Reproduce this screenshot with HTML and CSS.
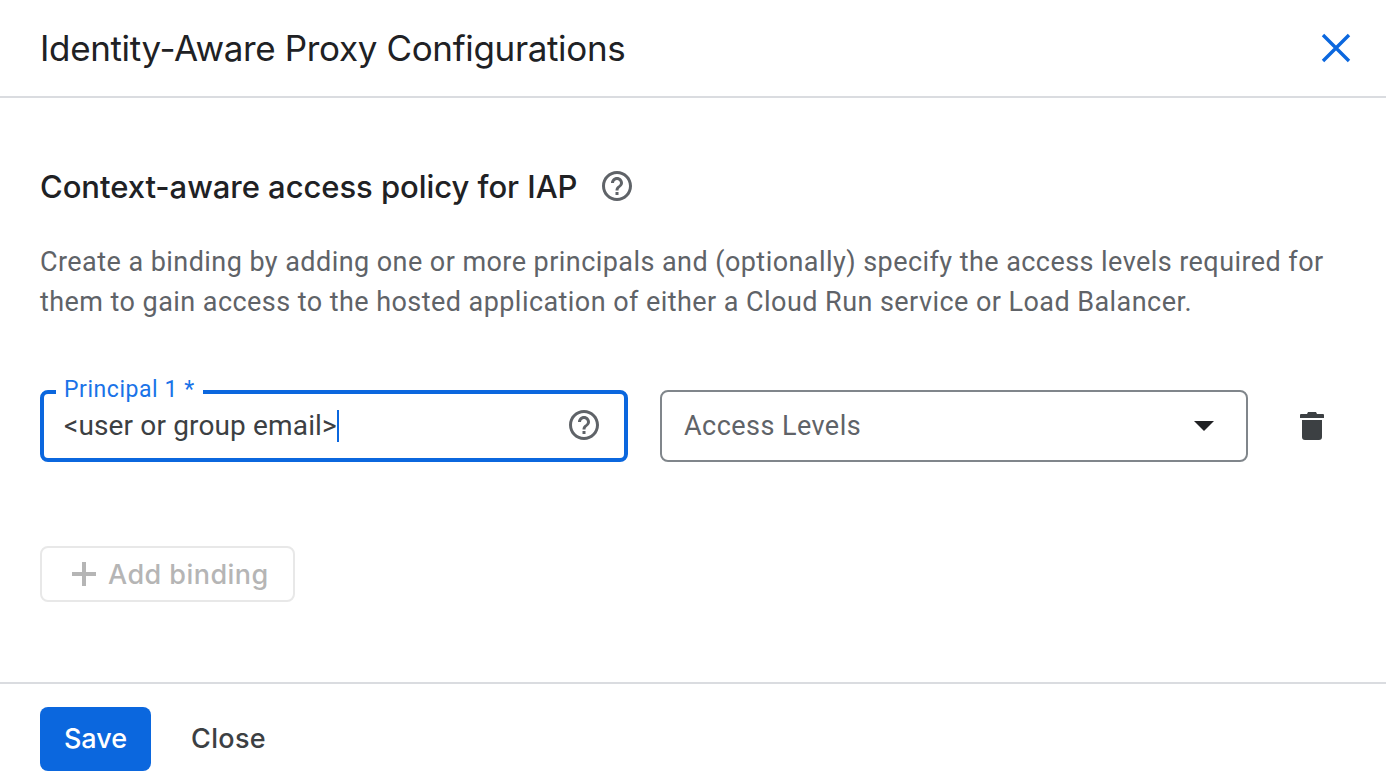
FILE: index.html
```html
<!DOCTYPE html>
<html>
<head>
	<title>Identity-Aware Proxy Configurations</title>
	<link rel="stylesheet" href="styles.css">
</head>
<body>
	<div class="panel">
		<div class="header">
			<h1 class="title">Identity-Aware Proxy Configurations</h1>
			<button class="close-x" aria-label="Close">
				<svg width="48" height="48" viewBox="0 0 48 48"><path d="M11 11L37 37M37 11L11 37" fill="none" stroke="#0b67de" stroke-width="3.4"/></svg>
			</button>
		</div>
		<div class="content">
			<div class="section-head">
				<h2 class="section-title">Context-aware access policy for IAP</h2>
				<svg class="help" width="36" height="36" viewBox="0 0 24 24"><path fill="#5f6368" d="M11 18h2v-2h-2v2zm1-16C6.48 2 2 6.48 2 12s4.48 10 10 10 10-4.48 10-10S17.52 2 12 2zm0 18c-4.41 0-8-3.59-8-8s3.59-8 8-8 8 3.59 8 8-3.59 8-8 8zm0-14c-2.21 0-4 1.79-4 4h2c0-1.1.9-2 2-2s2 .9 2 2c0 2-3 1.75-3 5h2c0-2.25 3-2.5 3-5 0-2.21-1.79-4-4-4z"/></svg>
			</div>
			<p class="desc">Create a binding by adding one or more principals and (optionally) specify the access levels required for them to gain access to the hosted application of either a Cloud Run service or Load Balancer.</p>
			<div class="binding">
				<div class="field field-active">
					<span class="field-label">Principal 1 *</span>
					<span class="field-value">&lt;user or group email&gt;</span><span class="caret"></span>
					<svg class="field-help" width="36" height="36" viewBox="0 0 24 24"><path fill="#5f6368" d="M11 18h2v-2h-2v2zm1-16C6.48 2 2 6.48 2 12s4.48 10 10 10 10-4.48 10-10S17.52 2 12 2zm0 18c-4.41 0-8-3.59-8-8s3.59-8 8-8 8 3.59 8 8-3.59 8-8 8zm0-14c-2.21 0-4 1.79-4 4h2c0-1.1.9-2 2-2s2 .9 2 2c0 2-3 1.75-3 5h2c0-2.25 3-2.5 3-5 0-2.21-1.79-4-4-4z"/></svg>
				</div>
				<div class="field field-select">
					<span class="select-value">Access Levels</span>
					<svg class="arrow" width="20" height="10" viewBox="0 0 20 10"><path d="M0 0H20L10 10Z" fill="#202124"/></svg>
				</div>
				<svg class="trash" width="24" height="28" viewBox="0 0 24 28"><path fill="#3c4043" d="M8 0h8l1 2h6a1 1 0 0 1 1 1v3H0V3a1 1 0 0 1 1-1h6zM2 8h20v17a3 3 0 0 1-3 3H5a3 3 0 0 1-3-3z"/></svg>
			</div>
			<button class="add-binding" disabled>
				<svg width="24" height="24" viewBox="0 0 24 24"><path d="M12 0V24M0 12H24" fill="none" stroke="#b5b5b5" stroke-width="4"/></svg>
				Add binding
			</button>
		</div>
		<div class="footer">
			<button class="save">Save</button>
			<button class="close">Close</button>
		</div>
	</div>
</body>
</html>
```

FILE: styles.css
```css
html, body {
	margin: 0;
	height: 100%;
	background-color: white;
	font-family: Roboto, Arial, sans-serif;
}

.panel {
	width: 1386px;
	height: 784px;
	overflow: hidden;
	display: flex;
	flex-direction: column;
}

.header {
	height: 96px;
	flex: none;
	border-bottom: 2px solid #dadce0;
	padding: 0 26px 0 40px;
	display: flex;
	align-items: center;
	justify-content: space-between;
}

.title {
	margin: 0;
	font-family: Inter, Roboto, sans-serif;
	font-size: 35px;
	font-weight: 400;
	letter-spacing: -0.35px;
	color: #202124;
}

.close-x {
	background: none;
	border: none;
	padding: 0;
	width: 48px;
	height: 48px;
	display: flex;
}

.content {
	flex: 1;
	padding: 0 40px;
}

.section-head {
	margin-top: 65px;
	height: 46px;
	display: flex;
	align-items: center;
	gap: 22px;
}

.section-title {
	margin: 0;
	font-family: Inter, Roboto, sans-serif;
	font-size: 31px;
	font-weight: 500;
	letter-spacing: -0.05px;
	color: #202124;
}

.desc {
	margin: 33px 0 0;
	font-size: 27px;
	line-height: 40px;
	letter-spacing: 0.44px;
	color: #5f6368;
}

.binding {
	margin-top: 68px;
	display: flex;
	align-items: center;
	gap: 32px;
}

.field {
	box-sizing: border-box;
	width: 588px;
	height: 72px;
	position: relative;
	display: flex;
	align-items: center;
	font-size: 27px;
	letter-spacing: 0.45px;
}

.field-active {
	border: 4px solid #0b67de;
	border-radius: 8px;
	padding-left: 20px;
	font-size: 28px;
	letter-spacing: 0.15px;
	color: #3c4043;
}

.field-value {
	margin-top: -2px;
}

.field-select {
	border: 2px solid #80868b;
	border-radius: 8px;
	padding: 0 32px 0 22px;
	justify-content: space-between;
	color: #5f6368;
}

.field-label {
	position: absolute;
	left: 12px;
	top: -19px;
	padding: 0 8px;
	background-color: white;
	font-size: 23px;
	line-height: 30px;
	letter-spacing: 0.55px;
	color: #1a73e8;
}

.caret {
	width: 2px;
	height: 32px;
	background-color: #0b67de;
}

.field-help {
	position: absolute;
	right: 22px;
	top: 13px;
}

.trash {
	margin-left: 20px;
}

.add-binding {
	margin-top: 84px;
	box-sizing: border-box;
	width: 255px;
	height: 56px;
	display: flex;
	align-items: center;
	gap: 12px;
	padding: 0 0 0 30px;
	background: white;
	border: 2px solid #e8e8e8;
	border-radius: 8px;
	font-family: Inter, Roboto, sans-serif;
	font-size: 27px;
	font-weight: 500;
	letter-spacing: 0.45px;
	color: #b5b5b5;
}

.footer {
	box-sizing: border-box;
	height: 102px;
	flex: none;
	border-top: 2px solid #dadce0;
	padding: 23px 40px 0;
	display: flex;
	align-items: flex-start;
	gap: 16px;
}

.save, .close {
	height: 64px;
	border: none;
	padding-bottom: 3px;
	font-family: Inter, Roboto, sans-serif;
	font-size: 27px;
	font-weight: 500;
}

.save {
	width: 111px;
	background-color: #0b67de;
	border-radius: 8px;
	color: white;
}

.close {
	background: none;
	padding-left: 24px;
	padding-right: 24px;
	letter-spacing: 0.35px;
	color: #3c4043;
}
```
